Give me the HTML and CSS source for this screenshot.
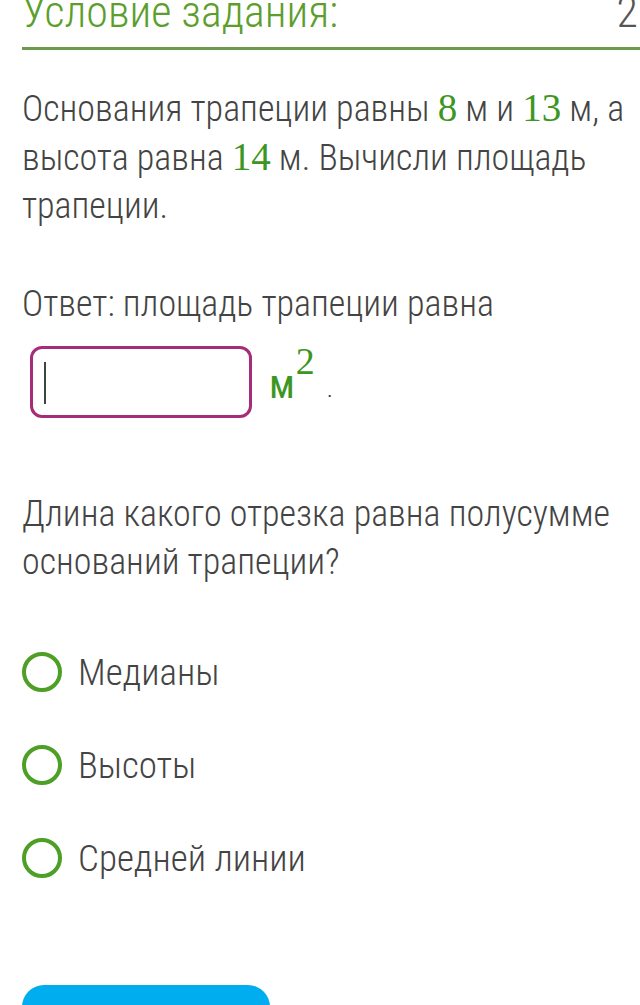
FILE: index.html
```html
<html>
   <head>
      <meta charset="UTF-8">
      <title>Условие задания</title>
      <link rel="stylesheet" href="styles.css">
   </head>
   <body>
      <div class="task">
         <div class="task__head">
            <h2>Условие задания:</h2>
            <span class="task__points">2</span>
         </div>

         <p class="task__text">
            Основания трапеции равны <span class="num">8</span> м и <span class="num">13</span> м, а
            высота равна <span class="num">14</span> м. Вычисли площадь
            трапеции.
         </p>

         <p class="task__text task__answer">Ответ: площадь трапеции равна</p>
         <div class="answer">
            <div class="answer__box"><span class="caret"></span></div>
            <span class="unit">м<sup>2</sup></span>
            <span class="dot">.</span>
         </div>

         <p class="task__text task__question">Длина какого отрезка равна полусумме оснований трапеции?</p>

         <ul class="choices">
            <li><span class="radio"></span>Медианы</li>
            <li><span class="radio"></span>Высоты</li>
            <li><span class="radio"></span>Средней линии</li>
         </ul>

         <span class="btn__send"></span>
      </div>
   </body>
</html>
```

FILE: styles.css
```css
* {
  box-sizing: border-box;
}
body {
    margin: 0;
    background-color: #fff;
    color: #444;
    font-family: "Roboto", sans-serif;
    font-weight: 300;
    font-stretch: 75%;
    overflow: hidden;
}
.task {
    padding: 0 0 0 22px;
}
/* The header is scrolled half out of view */
.task__head {
    display: flex;
    justify-content: space-between;
    align-items: flex-end;
    margin-top: -13px;
    padding-bottom: 10px;
    border-bottom: 3px solid #6c9a4c;
}
.task__head h2 {
    margin: 0;
    font-size: 44px;
    font-weight: 300;
    color: #5c9e2c;
    line-height: 50px;
}
.task__points {
    font-size: 44px;
    line-height: 50px;
    color: #555;
    margin-right: 2px;
}
.task__text {
    margin: 34px 0 0 0;
    font-size: 36px;
    line-height: 48px;
}
.num {
    font-family: "Liberation Serif", serif;
    font-weight: 400;
    font-stretch: normal;
    font-size: 39px;
    color: #3d9622;
}
.task__answer {
    margin-top: 50px;
}
/* Answer input row */
.answer {
    display: flex;
    align-items: flex-start;
    margin: 18px 0 0 8px;
}
.answer__box {
    width: 222px;
    height: 72px;
    border: 3px solid #a62c7a;
    border-radius: 12px;
    padding: 13px 0 0 11px;
}
.caret {
    display: block;
    width: 2px;
    height: 42px;
    background: #3c463c;
}
.unit {
    margin: 15px 0 0 17px;
    font-size: 40px;
    line-height: 40px;
    font-weight: 400;
    font-stretch: 85%;
    color: #3d9622;
}
.unit sup {
    font-family: "Liberation Serif", serif;
    font-stretch: normal;
    font-size: 38px;
    vertical-align: 24px;
    line-height: 0;
    margin-left: 1px;
}
.dot {
    margin: 29px 0 0 12px;
    font-size: 26px;
    line-height: 26px;
    color: #333;
}
.task__question {
    margin-top: 72px;
}
/* Radio choices */
.choices {
    margin: 62px 0 0 0;
    padding: 0;
    list-style-type: none;
}
.choices li {
    display: flex;
    align-items: center;
    height: 48px;
    margin-bottom: 45px;
    font-size: 37px;
}
.choices li:last-child {
    margin-bottom: 0;
}
.radio {
    width: 40px;
    height: 40px;
    border: 4px solid #4d9f25;
    border-radius: 50%;
    margin-right: 16px;
}
.btn__send {
    display: block;
    width: 248px;
    height: 60px;
    margin-top: 103px;
    background: #00aeef;
    border-radius: 22px;
}
```
